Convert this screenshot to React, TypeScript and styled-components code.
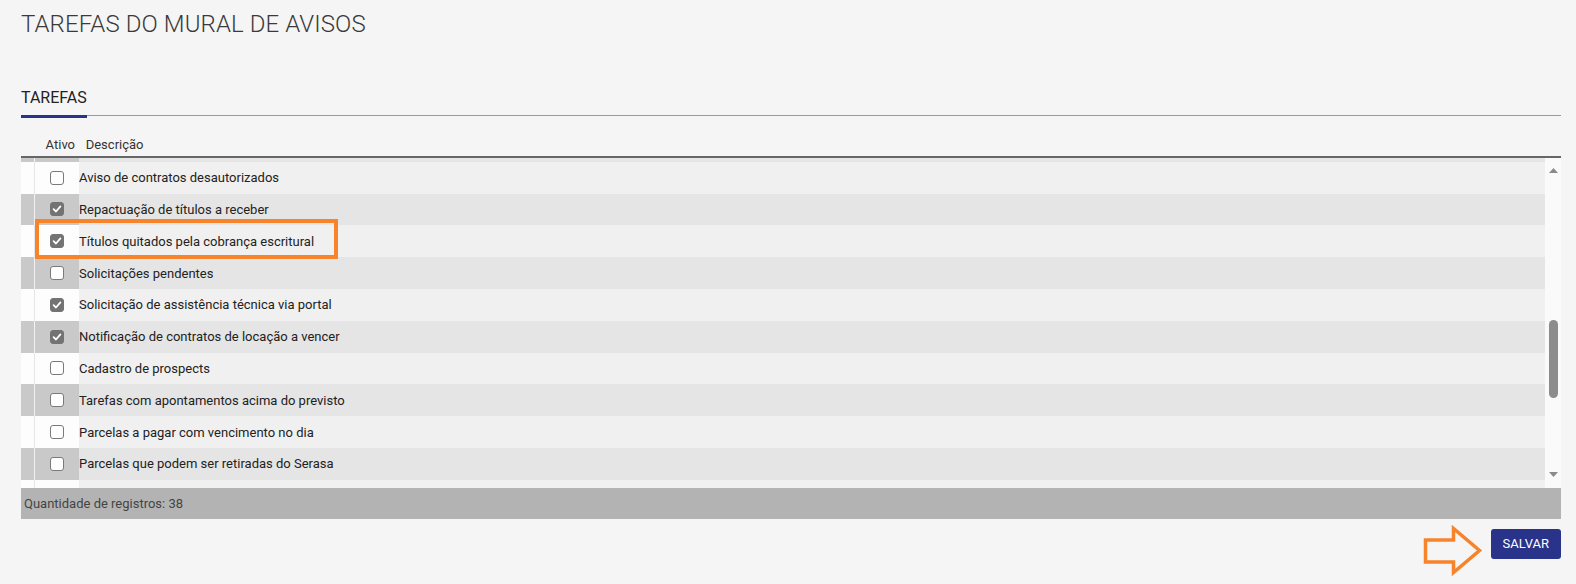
import React from 'react';
import styled, { createGlobalStyle } from 'styled-components';

const GlobalStyle = createGlobalStyle`
  html, body {
    margin: 0;
    padding: 0;
    background: #f5f5f5;
    font-family: Roboto, 'Liberation Sans', Arial, sans-serif;
  }
`;

const Page = styled.div`
  padding: 0 15px 0 21px;
`;

const Title = styled.h1`
  margin: 9px 0 0;
  font-size: 24px;
  line-height: 30px;
  font-weight: 300;
  color: #3a3a3a;
  letter-spacing: 0.1px;
`;

const TabStrip = styled.div`
  margin-top: 49px;
  display: flex;
  border-bottom: 1px solid #9a9a9a;
`;

const Tab = styled.div`
  font-size: 16px;
  line-height: 19px;
  color: #222;
  padding-bottom: 7.5px;
  border-bottom: 3px solid #283389;
  margin-bottom: -3px;
`;

const Table = styled.div`
  position: relative;
`;

const HeadRow = styled.div`
  display: grid;
  grid-template-columns: 14px 44px 1fr;
  padding: 21px 0 3px;
  border-bottom: 2px solid #666;
  font-size: 13px;
  line-height: 16px;
  color: #333;
`;

const HeadCell = styled.div<{ $align?: 'left' | 'right'; $pad?: string }>`
  text-align: ${({ $align }) => $align || 'left'};
  padding: ${({ $pad }) => $pad || '0'};
  white-space: nowrap;
`;

const Body = styled.div`
  position: relative;
  display: grid;
  grid-template-columns: 1fr 15px;
  height: 330px;
`;

const RowsViewport = styled.div`
  overflow: hidden;
  border-right: 1px solid #fafafa;
`;

const RowsList = styled.div`
  margin-top: -27.5px;
`;

const Row = styled.div<{ $even: boolean }>`
  display: grid;
  grid-template-columns: 14px 44px 1fr;
  height: 31.8px;
  background: ${({ $even }) => ($even ? '#e5e5e5' : '#f0f0f0')};
`;

const Lead = styled.div<{ $even: boolean }>`
  background: ${({ $even }) => ($even ? '#c9c9c9' : '#fdfdfd')};
  border-right: 1px solid ${({ $even }) => ($even ? '#f2f2f2' : '#e6e6e6')};
`;

const CheckCell = styled.div<{ $even: boolean }>`
  display: flex;
  align-items: center;
  justify-content: center;
  padding-right: 1px;
  background: ${({ $even }) => ($even ? '#c9c9c9' : '#fdfdfd')};
`;

const Box = styled.span<{ $checked: boolean }>`
  box-sizing: border-box;
  width: 14px;
  height: 14px;
  border-radius: 3px;
  display: flex;
  align-items: center;
  justify-content: center;
  background: ${({ $checked }) => ($checked ? '#737373' : '#ffffff')};
  border: 1px solid ${({ $checked }) => ($checked ? '#737373' : '#7a7a7a')};
`;

const Desc = styled.div`
  display: flex;
  align-items: center;
  font-size: 13px;
  color: #222;
  white-space: nowrap;
  overflow: hidden;
`;

const Track = styled.div`
  display: flex;
  flex-direction: column;
  align-items: center;
  background: #fafafa;
`;

const ArrowBtn = styled.div`
  height: 25.5px;
  display: flex;
  align-items: center;
  justify-content: center;
`;

const Thumb = styled.div`
  margin-top: 137px;
  width: 9px;
  height: 78px;
  border-radius: 5px;
  background: #8c8c8c;
`;

const Spacer = styled.div`
  flex: 1;
`;

const Highlight = styled.div`
  position: absolute;
  left: 14px;
  top: 61px;
  width: 303px;
  height: 40px;
  box-sizing: border-box;
  border: 4px solid #f7832b;
  pointer-events: none;
`;

const Footer = styled.div`
  height: 31px;
  line-height: 31px;
  background: #b3b3b3;
  padding-left: 3px;
  font-size: 13px;
  color: #444;
`;

const Actions = styled.div`
  display: flex;
  justify-content: flex-end;
  align-items: flex-start;
  gap: 7px;
  margin-top: 10px;
`;

const ArrowMark = styled.svg`
  margin-top: -4px;
  display: block;
`;

const SaveButton = styled.button`
  height: 30px;
  padding: 0 12px;
  border: none;
  border-radius: 3px;
  background: #283389;
  color: #fff;
  font-family: Roboto, 'Liberation Sans', Arial, sans-serif;
  font-size: 13px;
  text-transform: uppercase;
  cursor: pointer;
`;

type Task = { id: number; label: string; checked: boolean };

// first and last entries are only partly scrolled into view; their text stays out of sight
const tasks: Task[] = [
  { id: 1, label: '', checked: false },
  { id: 2, label: 'Aviso de contratos desautorizados', checked: false },
  { id: 3, label: 'Repactuação de títulos a receber', checked: true },
  { id: 4, label: 'Títulos quitados pela cobrança escritural', checked: true },
  { id: 5, label: 'Solicitações pendentes', checked: false },
  { id: 6, label: 'Solicitação de assistência técnica via portal', checked: true },
  { id: 7, label: 'Notificação de contratos de locação a vencer', checked: true },
  { id: 8, label: 'Cadastro de prospects', checked: false },
  { id: 9, label: 'Tarefas com apontamentos acima do previsto', checked: false },
  { id: 10, label: 'Parcelas a pagar com vencimento no dia', checked: false },
  { id: 11, label: 'Parcelas que podem ser retiradas do Serasa', checked: false },
  { id: 12, label: '', checked: false }
];

const Check: React.FC = () => (
  <svg width="10" height="10" viewBox="0 0 10 10">
    <path d="M1.6 5.2 L4 7.5 L8.4 2.4" fill="none" stroke="#fff" strokeWidth="1.8" strokeLinecap="round" strokeLinejoin="round" />
  </svg>
);

const App: React.FC = () => {
  return (
    <Page>
      <GlobalStyle />
      <Title>TAREFAS DO MURAL DE AVISOS</Title>
      <TabStrip>
        <Tab>TAREFAS</Tab>
      </TabStrip>
      <Table>
        <HeadRow>
          <div />
          <HeadCell $align="right" $pad="0 4px 0 0">Ativo</HeadCell>
          <HeadCell $pad="0 0 0 6.7px">Descrição</HeadCell>
        </HeadRow>
        <Body>
          <RowsViewport>
            <RowsList>
              {tasks.map((t, i) => {
                const even = i % 2 === 0;
                return (
                  <Row key={t.id} $even={even}>
                    <Lead $even={even} />
                    <CheckCell $even={even}>
                      <Box $checked={t.checked}>{t.checked && <Check />}</Box>
                    </CheckCell>
                    <Desc>{t.label}</Desc>
                  </Row>
                );
              })}
            </RowsList>
          </RowsViewport>
          <Track>
            <ArrowBtn>
              <svg width="9" height="5" viewBox="0 0 9 5">
                <path d="M0 5 L4.5 0 L9 5 Z" fill="#8a8a8a" />
              </svg>
            </ArrowBtn>
            <Thumb />
            <Spacer />
            <ArrowBtn>
              <svg width="9" height="5" viewBox="0 0 9 5">
                <path d="M0 0 L9 0 L4.5 5 Z" fill="#8a8a8a" />
              </svg>
            </ArrowBtn>
          </Track>
          <Highlight />
        </Body>
        <Footer>Quantidade de registros: 38</Footer>
      </Table>
      <Actions>
        <ArrowMark width="62" height="52" viewBox="0 0 62 52">
          <polygon
            points="3.5,15 31.5,15 31.5,3.5 57.5,25.5 31.5,47.5 31.5,37 3.5,37"
            fill="none"
            stroke="#f7832b"
            strokeWidth="3.5"
          />
        </ArrowMark>
        <SaveButton>Salvar</SaveButton>
      </Actions>
    </Page>
  );
};

export default App;
